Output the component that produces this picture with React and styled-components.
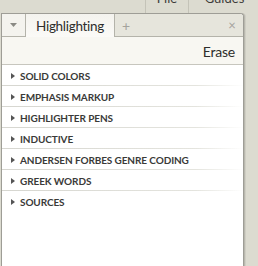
import styled, { createGlobalStyle } from 'styled-components'

const GlobalStyle = createGlobalStyle`
	html, body {
		margin: 0;
		padding: 0;
		background: #dcdbd0;
		font-family: Lato, "Open Sans", sans-serif;
		overflow: hidden;
	}
`

const groups = [
	'Solid Colors',
	'Emphasis Markup',
	'Highlighter Pens',
	'Inductive',
	'Andersen Forbes Genre Coding',
	'Greek Words',
	'Sources',
]

const App = () => {
	return (
		<>
			<GlobalStyle />
			<Page>
				<TopBar>
					<ToolButton width={145} />
					<ToolButton width={42} divider>File</ToolButton>
					<ToolButton width={71} divider>Guides</ToolButton>
				</TopBar>
				<Panel>
					<TabBar>
						<MenuButton>
							<svg width="7" height="4" viewBox="0 0 7 4">
								<path d="M0 0 L7 0 L3.5 4 Z" fill="#8a8a84" />
							</svg>
						</MenuButton>
						<Tab>Highlighting</Tab>
						<AddTab>+</AddTab>
						<CloseTab>×</CloseTab>
					</TabBar>
					<Header>
						<HeaderButton>Erase</HeaderButton>
					</Header>
					<List>
						{groups.map((name) => (
							<Row key={name}>
								<svg width="4" height="6" viewBox="0 0 4 6">
									<path d="M0 0 L4 3 L0 6 Z" fill="#555" />
								</svg>
								<RowLabel>{name}</RowLabel>
							</Row>
						))}
					</List>
				</Panel>
			</Page>
		</>
	)
}

const Page = styled.div`
	width: 258px;
	height: 266px;
	display: flex;
	flex-direction: column;
	overflow: hidden;
`

const TopBar = styled.div`
	height: 13px;
	flex-shrink: 0;
	display: flex;
	overflow: hidden;
`

const ToolButton = styled.div`
	width: ${props => props.width}px;
	flex-shrink: 0;
	border-left: ${props => props.divider ? '1px solid #c4c3b8' : 'none'};
	font-size: 13px;
	line-height: 13px;
	color: #3c3c3a;
	text-align: center;
	margin-top: -8px;
	height: 21px;
`

const Panel = styled.div`
	margin-left: 1px;
	width: 241px;
	flex: 1;
	display: flex;
	flex-direction: column;
	background: #fff;
	border: 1px solid #9e9d96;
	border-bottom: none;
	border-radius: 0 4px 0 0;
	box-shadow: 1px 0 0 #b9b8ae, 2px 0 0 #cfcec4;
	overflow: hidden;
`

const TabBar = styled.div`
	height: 22px;
	flex-shrink: 0;
	display: flex;
	align-items: stretch;
	background: #e6e5dc;
	border-bottom: 1px solid #b4b3aa;
`

const MenuButton = styled.div`
	width: 24px;
	display: flex;
	align-items: center;
	justify-content: center;
	background: #f4f3ee;
	border-right: 1px solid #b4b3aa;
	box-sizing: border-box;
`

const Tab = styled.div`
	width: 89px;
	display: flex;
	align-items: center;
	justify-content: center;
	font-size: 13.5px;
	letter-spacing: -0.3px;
	color: #2e2e2c;
	background: linear-gradient(#f4f3ee, #fbfaf7);
	border-right: 1px solid #b4b3aa;
	margin-bottom: -1px;
	padding-top: 1px;
	box-sizing: border-box;
`

const AddTab = styled.div`
	width: 22px;
	display: flex;
	align-items: center;
	justify-content: center;
	font-size: 14px;
	color: #a4a39c;
`

const CloseTab = styled.div`
	margin-left: auto;
	width: 22px;
	display: flex;
	align-items: center;
	justify-content: center;
	font-size: 13px;
	color: #a4a39c;
`

const Header = styled.div`
	height: 27px;
	flex-shrink: 0;
	display: flex;
	align-items: center;
	justify-content: flex-end;
	padding-right: 8px;
	background: #f8f7f2;
	border-bottom: 1px solid #c7c6be;
`

const HeaderButton = styled.div`
	font-size: 14px;
	letter-spacing: -0.2px;
	color: #2e2e2c;
	padding-top: 2px;
`

const List = styled.div`
	display: flex;
	flex-direction: column;
`

const Row = styled.div`
	height: 19px;
	display: flex;
	align-items: center;
	gap: 5px;
	padding-left: 9px;
	padding-top: 1px;
	border-bottom: 1px solid;
	border-image: linear-gradient(to right, #d6d6d0, #e4e4de 80%, #fff) 1;
	&:last-child {
		border-bottom: none;
	}
`

const RowLabel = styled.span`
	font-size: 10px;
	font-weight: 700;
	text-transform: uppercase;
	color: #3a3a38;
	letter-spacing: -0.1px;
`

export default App
